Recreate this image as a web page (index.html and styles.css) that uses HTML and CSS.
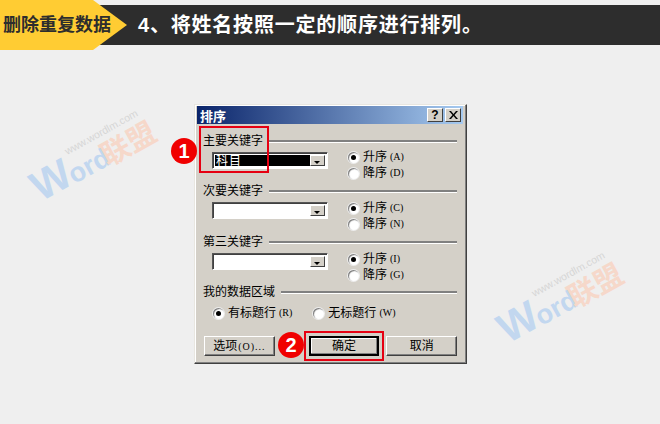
FILE: index.html
```html
<!DOCTYPE html>
<html lang="zh-CN">
<head>
  <meta charset="UTF-8" />
  <title>排序</title>
  <link rel="stylesheet" href="styles.css">
</head>
<body>
  <header class="top">
    <h1 class="step-title">4、将姓名按照一定的顺序进行排列。</h1>
    <div class="tag">删除重复数据</div>
  </header>

  <div class="mark mark-a"><span class="mark-url">www.wordlm.com</span><span class="mark-w">W</span><span class="mark-ord">ord</span><span class="mark-cn">联盟</span></div>
  <div class="mark mark-b"><span class="mark-url">www.wordlm.com</span><span class="mark-w">W</span><span class="mark-ord">ord</span><span class="mark-cn">联盟</span></div>

  <div class="dialog">
    <div class="titlebar">
      <span class="title-text">排序</span>
      <span class="title-btn help">?</span>
      <span class="title-btn close">
        <svg width="9" height="8" viewBox="0 0 9 8"><path d="M0 0h2l2.500 3 2.500-3h2L5.500 4 9 8H7L4.500 5 2 8H0l3.500-4z" fill="#000"/></svg>
      </span>
    </div>

    <div class="dialog-body">
      <section class="group group-first">
        <div class="legend">主要关键字</div>
        <div class="controls">
          <div class="select select-on">
            <div class="select-value">科目</div>
            <div class="select-arrow"></div>
          </div>
          <div class="radios">
            <label class="radio checked"><i></i>升序<span class="key">(A)</span></label>
            <label class="radio"><i></i>降序<span class="key">(D)</span></label>
          </div>
        </div>
      </section>

      <section class="group">
        <div class="legend">次要关键字</div>
        <div class="controls">
          <div class="select">
            <div class="select-value"></div>
            <div class="select-arrow"></div>
          </div>
          <div class="radios">
            <label class="radio checked"><i></i>升序<span class="key">(C)</span></label>
            <label class="radio"><i></i>降序<span class="key">(N)</span></label>
          </div>
        </div>
      </section>

      <section class="group">
        <div class="legend">第三关键字</div>
        <div class="controls">
          <div class="select">
            <div class="select-value"></div>
            <div class="select-arrow"></div>
          </div>
          <div class="radios">
            <label class="radio checked"><i></i>升序<span class="key">(I)</span></label>
            <label class="radio"><i></i>降序<span class="key">(G)</span></label>
          </div>
        </div>
      </section>

      <section class="group group-data">
        <div class="legend">我的数据区域</div>
        <div class="radios-row">
          <label class="radio checked"><i></i>有标题行<span class="key">(R)</span></label>
          <label class="radio"><i></i>无标题行<span class="key">(W)</span></label>
        </div>
      </section>

      <div class="buttons">
        <button class="btn btn-options">选项<span class="key">(O)...</span></button>
        <button class="btn btn-default">确定</button>
        <button class="btn btn-cancel">取消</button>
      </div>
    </div>

    <div class="red-box box-one"></div>
    <div class="red-box box-two"></div>
    <div class="badge badge-one">1</div>
    <div class="badge badge-two">2</div>
  </div>
</body>
</html>
```

FILE: styles.css
```css
* {
  box-sizing: border-box;
}
body {
  margin: 0;
  width: 660px;
  height: 424px;
  overflow: hidden;
  position: relative;
  background-color: #efefef;
  font-family: "Liberation Sans", "Noto Sans CJK SC", sans-serif;
  color: #000;
}

/* top strip */
.top {
  display: grid;
  height: 50px;
}
.step-title {
  grid-area: 1 / 1;
  margin: 5px 0;
  padding-left: 138px;
  background-color: #2d2d2d;
  color: #fff;
  font-size: 20px;
  font-weight: bold;
  letter-spacing: 0.8px;
  line-height: 40px;
}
.tag {
  grid-area: 1 / 1;
  width: 127px;
  padding-left: 3px;
  background-color: #ffcc33;
  clip-path: polygon(0 0, 93px 0, 127px 25px, 93px 50px, 0 50px);
  color: #2d2d2d;
  font-size: 18px;
  font-weight: bold;
  line-height: 50px;
  white-space: nowrap;
}

/* watermarks */
.mark {
  position: absolute;
  width: 140px;
  height: 50px;
  transform: rotate(-29deg);
  transform-origin: 0 100%;
  white-space: nowrap;
  line-height: 1;
}
.mark-a {
  left: 44px;
  top: 158px;
}
.mark-b {
  left: 511px;
  top: 300px;
}
.mark-w, .mark-ord {
  color: #c2d7ef;
  font-weight: bold;
}
.mark-w {
  position: absolute;
  left: 0;
  bottom: 0;
  font-size: 42px;
}
.mark-ord {
  position: absolute;
  left: 38px;
  bottom: 1px;
  font-size: 27px;
}
.mark-cn {
  position: absolute;
  left: 76px;
  bottom: 0;
  color: #f6d8ca;
  font-size: 29px;
  font-weight: bold;
}
.mark-url {
  position: absolute;
  left: 46px;
  top: 6px;
  color: #d6d6d6;
  font-size: 10.5px;
}

/* dialog */
.dialog {
  position: relative;
  width: 273px;
  height: 260px;
  margin: 54px 0 0 194px;
  padding: 1px 3px 3px 2px;
  background-color: #d4d0c8;
  border: 1px solid;
  border-color: #e8e6e0 #404040 #404040 #e8e6e0;
  box-shadow: inset -1px -1px 0 #808080, inset 1px 1px 0 #fff;
  font-size: 12px;
}
.titlebar {
  display: flex;
  align-items: center;
  height: 18px;
  padding: 0 2px 0 3px;
  background: linear-gradient(to right, #0a246a, #a6caf0);
}
.title-text {
  flex: 1;
  color: #fff;
  font-size: 13px;
  font-weight: bold;
}
.title-btn {
  display: flex;
  align-items: center;
  justify-content: center;
  width: 16px;
  height: 14px;
  background-color: #d4d0c8;
  border: 1px solid;
  border-color: #fff #404040 #404040 #fff;
  font-size: 12px;
  font-weight: bold;
}
.help {
  margin-right: 2px;
}
.dialog-body {
  padding: 10px 6px 0;
}

.group {
  margin-top: 3px;
}
.group-first {
  margin-top: 0;
}
.group-data {
  margin-top: 2px;
}
.legend {
  display: flex;
  align-items: center;
  gap: 6px;
  height: 14px;
  line-height: 14px;
  white-space: nowrap;
}
.legend::after {
  content: "";
  flex: 1;
  height: 2px;
  background-color: #808080;
  border-bottom: 1px solid #fff;
}
.controls {
  display: flex;
  margin-top: 2px;
  padding-left: 9px;
}
.group-first .controls {
  margin-top: 1px;
}

.select {
  display: flex;
  width: 116px;
  height: 17px;
  margin-top: 2px;
  padding: 2px;
  background-color: #fff;
  border: 1px solid;
  border-color: #555 #fff #fff #555;
  box-shadow: inset 1px 1px 0 #404040;
}
.group-first .select {
  margin-top: 3px;
  height: 17px;
}
.select-value {
  flex: 1;
  font-size: 12px;
  letter-spacing: 1px;
  line-height: 13px;
}
.select-on .select-value {
  background-color: #000;
  color: #fff;
  padding-left: 1px;
}
.select-arrow {
  position: relative;
  width: 15px;
  background-color: #d4d0c8;
  border: 1px solid;
  border-color: #fff #404040 #404040 #fff;
}
.select-arrow::after {
  content: "";
  position: absolute;
  left: 3px;
  top: 5px;
  border: 3px solid transparent;
  border-top: 3px solid #000;
  border-bottom: 0;
}

.radios {
  margin-left: 20px;
}
.radio {
  display: flex;
  align-items: center;
  height: 16px;
  line-height: 16px;
  white-space: nowrap;
}
.radio i {
  position: relative;
  width: 11px;
  height: 11px;
  margin-right: 4px;
  background-color: #fff;
  border-radius: 50%;
  box-shadow: inset 1px 1px 1px #777, 0 0 0 1px #eee;
}
.radio.checked i::after {
  content: "";
  position: absolute;
  left: 3px;
  top: 3px;
  width: 5px;
  height: 5px;
  background-color: #000;
  border-radius: 50%;
}
.key {
  margin-left: 3px;
  font-family: "Liberation Serif", serif;
  font-size: 10px;
}
.radios-row {
  display: flex;
  gap: 21px;
  margin-top: 6px;
  padding-left: 10px;
}

.buttons {
  display: flex;
  margin-top: 15px;
}
.btn {
  height: 20px;
  padding: 0;
  background-color: #d4d0c8;
  border: 1px solid;
  border-color: #fff #404040 #404040 #fff;
  box-shadow: inset -1px -1px 0 #808080;
  font-family: inherit;
  font-size: 12px;
  line-height: 17px;
}
.btn-options {
  width: 71px;
  margin-left: 1px;
}
.btn-options .key {
  margin-left: 1px;
  letter-spacing: 1px;
}
.btn-default {
  width: 71px;
  margin-left: 34px;
  border: 2px solid #000;
  box-shadow: inset -1px -1px 0 #808080, inset 1px 1px 0 #fff;
}
.btn-cancel {
  width: 71px;
  margin-left: 7px;
}

/* annotations on top of the dialog */
.red-box {
  position: absolute;
  border: 2px solid #e60012;
}
.box-one {
  left: 4px;
  top: 21px;
  width: 70px;
  height: 47px;
}
.box-two {
  left: 109px;
  top: 226px;
  width: 80px;
  height: 30px;
}
.badge {
  position: absolute;
  width: 26px;
  height: 26px;
  background-color: #f00000;
  border-radius: 50%;
  color: #fff;
  font-family: "Liberation Sans", sans-serif;
  font-size: 20px;
  font-weight: bold;
  line-height: 26px;
  text-align: center;
}
.badge-one {
  left: -24px;
  top: 33px;
}
.badge-two {
  left: 83px;
  top: 227px;
}
```
